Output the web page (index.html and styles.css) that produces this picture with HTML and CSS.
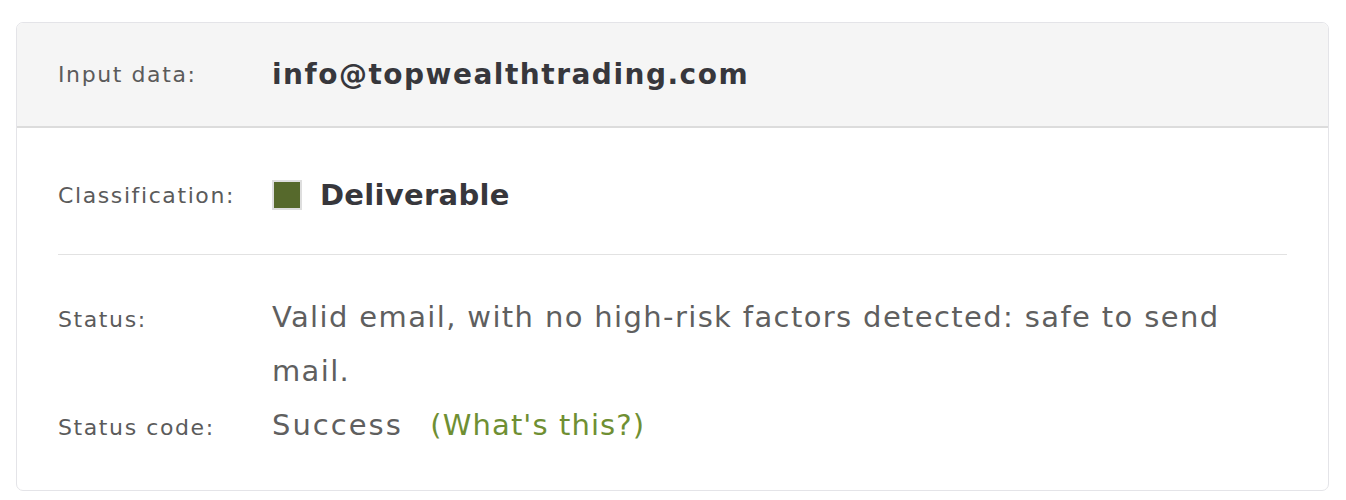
FILE: index.html
```html
<!DOCTYPE html>
<html>
<head>
<meta charset="utf-8">
<link rel="stylesheet" href="styles.css">
</head>
<body>
<div class="card">
  <div class="card-head">
    <div class="label">Input data:</div>
    <div class="email">info@topwealthtrading.com</div>
  </div>
  <div class="card-body">
    <div class="row class-row">
      <div class="label">Classification:</div>
      <div class="class-value"><span class="swatch"></span><span class="class-text">Deliverable</span></div>
    </div>
    <div class="sep"></div>
    <div class="details">
      <div class="label">Status:</div>
      <div class="text">Valid email, with no high-risk factors detected: safe to send mail.</div>
      <div class="label">Status code:</div>
      <div class="text"><span class="code">Success</span> <a class="link" href="#">(What's this?)</a></div>
    </div>
  </div>
</div>
</body>
</html>
```
FILE: styles.css
```css
html, body { margin: 0; padding: 0; background: #ffffff; }
body {
  padding: 22px 17px 0 16px;
  font-family: "DejaVu Sans", sans-serif;
  color: #5d5d5d;
}
.card {
  border: 1px solid #e4e4e8;
  border-radius: 7px;
  overflow: hidden;
  height: 469px;
  box-sizing: border-box;
}
.card-head {
  background: #f5f5f5;
  height: 103px;
  border-bottom: 2px solid #dcdcdc;
  display: grid;
  grid-template-columns: 214px 1fr;
  align-items: center;
  padding: 0 41px;
}
.label {
  font-size: 22px;
  letter-spacing: 1.6px;
  color: #5b5b5b;
}
.email {
  font-size: 28px;
  letter-spacing: 1.5px;
  font-weight: 700;
  color: #37373c;
}
.card-body {
  padding: 0 41px;
}
.row {
  display: grid;
  grid-template-columns: 214px 1fr;
  align-items: center;
}
.class-row { height: 60px; margin-top: 37px; }
.class-value { display: flex; align-items: center; }
.swatch {
  width: 30px; height: 30px;
  box-sizing: border-box;
  background: #56692c;
  border: 2px solid #dedede;
  margin-right: 18px;
}
.class-text {
  font-size: 29px;
  letter-spacing: 0.3px;
  font-weight: 700;
  color: #37373c;
}
.sep {
  height: 1px;
  background: #e2e2e2;
  margin-top: 29px;
}
.details {
  display: grid;
  grid-template-columns: 214px 1fr;
  margin-top: 35px;
  line-height: 54px;
  align-items: baseline;
}
.details .label { line-height: 54px; }
.text {
  font-size: 29px;
  letter-spacing: 1.37px;
  color: #5f5f5f;
  padding-right: 30px;
}
.code { letter-spacing: 2px; }
.link {
  color: #6f8f33;
  text-decoration: none;
  margin-left: 17px;
  letter-spacing: 1.1px;
}
```
